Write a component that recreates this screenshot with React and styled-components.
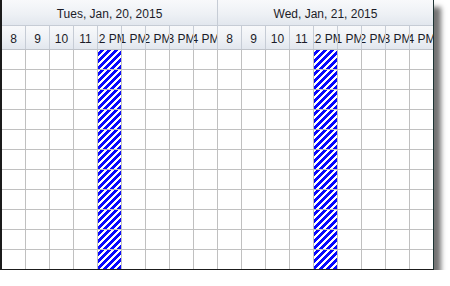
import React from "react";
import styled, { createGlobalStyle } from "styled-components";

const Global = createGlobalStyle`
  html, body {
    margin: 0;
    background: #ffffff;
  }
  body {
    font-family: "Liberation Sans", Arial, sans-serif;
  }
`;

const Frame = styled.div`
  width: 431px;
  border-left: 2px solid #1b1b1b;
  border-right: 1px solid #1d3434;
  border-bottom: 1px solid #1b1b1b;
  background: #ffffff;
  box-shadow: 7px 7px 5px rgba(0, 0, 0, 0.55);
`;

const headerBg = `linear-gradient(to bottom, #f8f9fb 0%, #eef1f5 55%, #e2e7ee 100%)`;

const DayRow = styled.div`
  display: flex;
  height: 26px;
  border-bottom: 1px solid #c6ccd5;
  box-sizing: border-box;
  background: ${headerBg};
`;

const DayTitle = styled.div`
  box-sizing: border-box;
  width: 216px;
  display: flex;
  align-items: center;
  justify-content: center;
  font-size: 12px;
  color: #1c1c28;
  border-right: 1px solid #c6ccd5;
  padding-top: 2px;
  &:last-child {
    width: 215px;
    border-right: none;
  }
`;

const HourRow = styled.div`
  display: flex;
  height: 24px;
  border-bottom: 1px solid #bfc3c9;
  box-sizing: border-box;
  background: ${headerBg};
`;

const HourCell = styled.div`
  box-sizing: border-box;
  flex: 0 0 24px;
  width: 24px;
  display: flex;
  align-items: center;
  justify-content: center;
  overflow: hidden;
  white-space: nowrap;
  font-size: 12px;
  color: #1c1c28;
  border-right: 1px solid #c6ccd5;
  padding-top: 2px;
  &:last-child {
    flex-basis: 23px;
    width: 23px;
    border-right: none;
  }
`;

const GridRow = styled.div`
  display: flex;
  height: 20px;
  box-sizing: border-box;
  border-bottom: 1px solid #c0c0c0;
  &:last-child {
    height: 19px;
    border-bottom: none;
  }
`;

const Slot = styled.div`
  box-sizing: border-box;
  flex: 0 0 24px;
  height: 100%;
  border-right: 1px solid #c0c0c0;
  background: ${p =>
    p.$busy
      ? "repeating-linear-gradient(-45deg, #0808ff 0px, #0808ff 3.2px, #ffffff 3.2px, #ffffff 4.95px)"
      : "#ffffff"};
  &:last-child {
    flex-basis: 23px;
    border-right: none;
  }
`;

const days = ["Tues, Jan, 20, 2015", "Wed, Jan, 21, 2015"];
const hours = ["8", "9", "10", "11", "12 PM", "1 PM", "2 PM", "3 PM", "4 PM"];
const columns = [...hours, ...hours];
const rows = Array.from({ length: 11 });

export default function App() {
  return (
    <>
      <Global />
      <Frame>
        <DayRow>
          {days.map(d => (
            <DayTitle key={d}>{d}</DayTitle>
          ))}
        </DayRow>
        <HourRow>
          {columns.map((h, i) => (
            <HourCell key={i}>{h}</HourCell>
          ))}
        </HourRow>
        {rows.map((_, r) => (
          <GridRow key={r}>
            {columns.map((h, i) => (
              <Slot key={i} $busy={h === "12 PM"} />
            ))}
          </GridRow>
        ))}
      </Frame>
    </>
  );
}
